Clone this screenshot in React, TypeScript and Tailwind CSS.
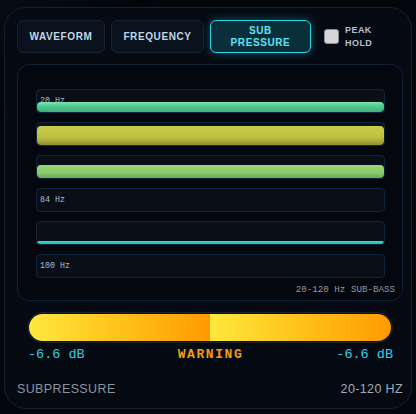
import React from "react";

const rows = [
  { label: "20 Hz", fill: 10, color: "linear-gradient(#7ee6b4, #52c890 40%, #3fae7c)" },
  { label: "", fill: 19, color: "linear-gradient(#c9cc4a, #bcc040 60%, #8e9130)" },
  { label: "", fill: 13, color: "linear-gradient(#9ad67a, #8aca6c 60%, #6fa856)" },
  { label: "84 Hz", fill: 0, color: "" },
  { label: "", fill: 3, color: "linear-gradient(#3dd6d0, #22b8b4)" },
  { label: "100 Hz", fill: 0, color: "" },
];

export default function App() {
  return (
    <div className="w-[416px] h-[414px] bg-[#03060b] pt-[7px] pl-[4px] overflow-hidden relative" style={{ fontFamily: "'Liberation Sans', Arial, sans-serif" }}>
      <div className="absolute -top-[40px] -left-[40px] w-[120px] h-[80px] rounded-full bg-[#0e2233] opacity-40 blur-2xl" />
      <div className="relative w-[408px] h-[402px] rounded-[22px] border border-[#142130] bg-[#060a12] pt-[12px] pl-[12px] pr-[8px]">
        {/* buttons */}
        <div className="flex items-center h-[33px]">
          <div className="w-[88px] h-[33px] rounded-[6px] border border-[#16222f] bg-[#0a121d] flex items-center justify-center text-[10px] font-bold tracking-[0.06em] text-[#c3d7e3]">
            WAVEFORM
          </div>
          <div className="ml-[6px] w-[93px] h-[33px] rounded-[6px] border border-[#16222f] bg-[#0a121d] flex items-center justify-center text-[10px] font-bold tracking-[0.06em] text-[#c3d7e3]">
            FREQUENCY
          </div>
          <div className="ml-[6px] w-[101px] h-[33px] rounded-[6px] border border-[#2ad4e6] bg-[#0b2f3a] flex flex-col items-center justify-center text-[10px] leading-[12px] font-bold tracking-[0.06em] text-[#5fe3f2] shadow-[0_0_10px_rgba(34,211,238,0.35)]">
            <span>SUB</span>
            <span>PRESSURE</span>
          </div>
          <div className="ml-[13px] w-[15px] h-[15px] rounded-[3px] bg-[#d6d6da] border border-[#8a8f96]" />
          <div className="ml-[6px] flex flex-col text-[9px] leading-[13px] font-bold tracking-[0.05em] text-[#b4c0cc]">
            <span>PEAK</span>
            <span>HOLD</span>
          </div>
        </div>

        {/* panel */}
        <div className="mt-[11px] w-[386px] h-[237px] rounded-[12px] border border-[#132031] bg-[#04070e] pt-[24px] pl-[18px] pr-[17px] flex flex-col">
          <div className="flex flex-col gap-[9px]">
            {rows.map((r, i) => (
              <div key={i} className="relative h-[24px] rounded-[4px] border border-[#13253a] bg-[#090e17] overflow-hidden">
                {r.label && (
                  <div className="absolute left-[3px] top-0 h-full flex items-center text-[8.3px] text-[#a9bfd2]" style={{ fontFamily: "'Liberation Mono', 'Courier New', monospace" }}>
                    {r.label}
                  </div>
                )}
                {r.fill > 0 && (
                  <div className="absolute left-0 right-0 bottom-0 rounded-[4px]" style={{ height: r.fill, background: r.color }} />
                )}
              </div>
            ))}
          </div>
          <div className="mt-[6px] text-right -mr-[10px] text-[9.2px] leading-[11px] text-[#8c9aa8]" style={{ fontFamily: "'Liberation Mono', 'Courier New', monospace" }}>
            20-120 Hz SUB-BASS
          </div>
        </div>

        {/* meter */}
        <div className="mt-[11px] ml-[10px] w-[366px] h-[31px] rounded-full border border-[#1a2330] bg-[#0a0f18] p-[1px] flex overflow-hidden">
          <div className="h-full w-1/2 rounded-l-full" style={{ background: "linear-gradient(90deg, #ffe83e, #ffc21a 50%, #ff9a00)" }} />
          <div className="h-full w-1/2 rounded-r-full" style={{ background: "linear-gradient(90deg, #ffe83e, #ffc21a 50%, #ff9a00)" }} />
        </div>

        <div className="mt-[4px] ml-[11px] w-[365px] flex items-center justify-between text-[13.5px] leading-[16px]" style={{ fontFamily: "'Liberation Mono', 'Courier New', monospace" }}>
          <span className="text-[#2fd0e8]">-6.6 dB</span>
          <span className="text-[#f59e0b] font-bold text-[13px] tracking-[0.12em]">WARNING</span>
          <span className="text-[#2fd0e8]">-6.6 dB</span>
        </div>

        <div className="mt-[19px] flex items-center justify-between w-[386px] text-[12.5px] leading-[14px] tracking-[0.03em] text-[#8b949e]">
          <span className="font-medium">SUBPRESSURE</span>
          <span className="text-[#a3abb4]">20-120 HZ</span>
        </div>
      </div>
    </div>
  );
}
